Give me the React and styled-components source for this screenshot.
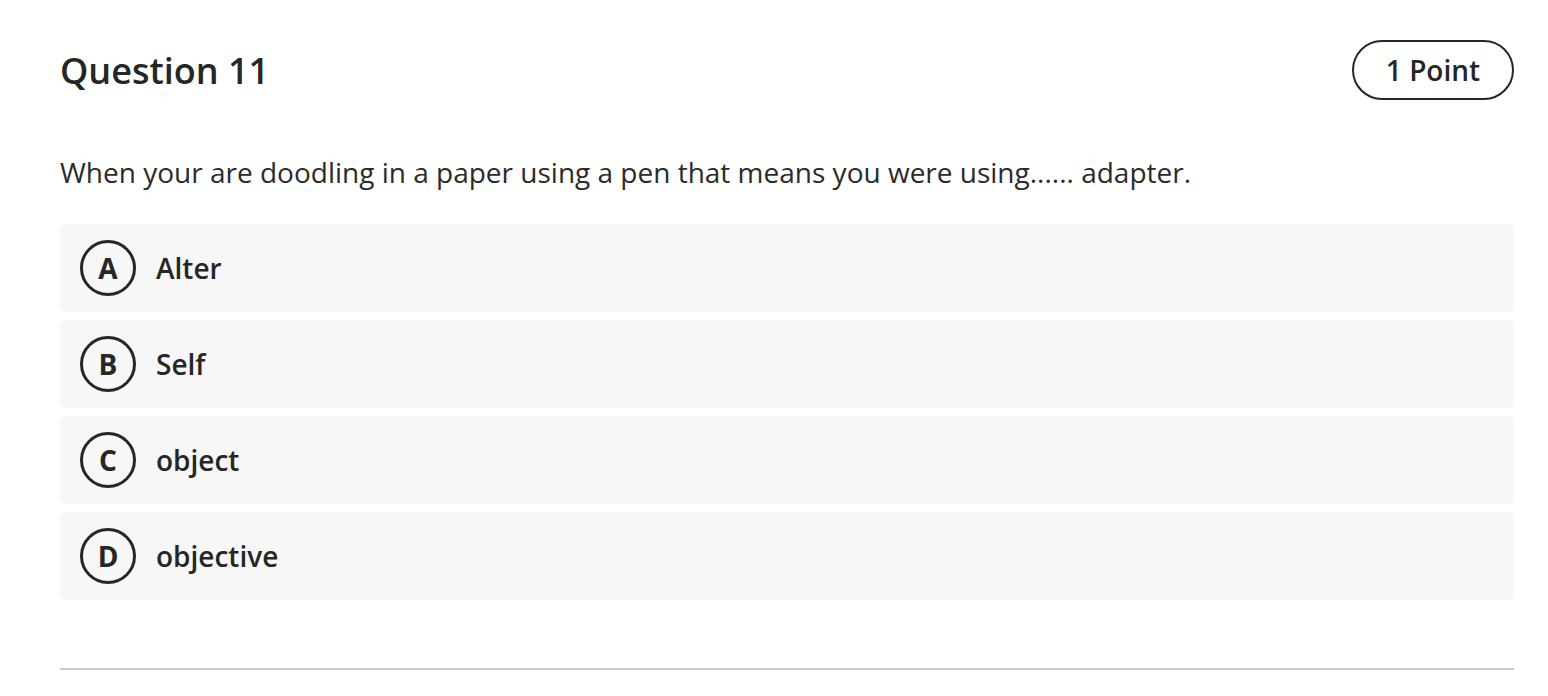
import React from 'react';
import styled, { createGlobalStyle } from 'styled-components';

const GlobalStyle = createGlobalStyle`
  body {
    margin: 0;
    background: #fff;
    font-family: "Open Sans", "Noto Sans", sans-serif;
    color: #262626;
  }
`;

const Page = styled.div`
  padding: 40px 34px 0 60px;
`;

const Header = styled.div`
  display: flex;
  justify-content: space-between;
  align-items: center;
  height: 60px;
`;

const Title = styled.h2`
  margin: 0;
  font-size: 36px;
  font-weight: 600;
  color: #262626;
`;

const PointPill = styled.div`
  box-sizing: border-box;
  height: 60px;
  width: 162px;
  border: 2px solid #262626;
  border-radius: 30px;
  display: flex;
  align-items: center;
  justify-content: center;
  font-size: 28px;
  font-weight: 600;
`;

const Prompt = styled.p`
  margin: 53px 0 33px;
  font-size: 28px;
  line-height: 38px;
  font-weight: 400;
  color: #2b2b2b;
`;

const Options = styled.div`
  display: flex;
  flex-direction: column;
  gap: 8px;
`;

const Option = styled.div`
  height: 88px;
  background: #f7f7f7;
  border-radius: 5px;
  display: flex;
  align-items: center;
  padding-left: 20px;
  gap: 20px;
`;

const Letter = styled.span`
  box-sizing: border-box;
  width: 56px;
  height: 56px;
  border: 3px solid #262626;
  border-radius: 50%;
  display: flex;
  align-items: center;
  justify-content: center;
  font-size: 28px;
  font-weight: 700;
`;

const Label = styled.span`
  font-size: 28px;
  font-weight: 600;
`;

const Divider = styled.hr`
  margin: 68px 0 0;
  border: none;
  height: 2px;
  background: #cacaca;
`;

const options = [
  { key: 'A', text: 'Alter' },
  { key: 'B', text: 'Self' },
  { key: 'C', text: 'object' },
  { key: 'D', text: 'objective' },
];

const App = () => (
  <>
    <GlobalStyle />
    <Page>
      <Header>
        <Title>Question 11</Title>
        <PointPill>1 Point</PointPill>
      </Header>
      <Prompt>When your are doodling in a paper using a pen that means you were using...... adapter.</Prompt>
      <Options>
        {options.map(o => (
          <Option key={o.key}>
            <Letter>{o.key}</Letter>
            <Label>{o.text}</Label>
          </Option>
        ))}
      </Options>
      <Divider />
    </Page>
  </>
);

export default App;
